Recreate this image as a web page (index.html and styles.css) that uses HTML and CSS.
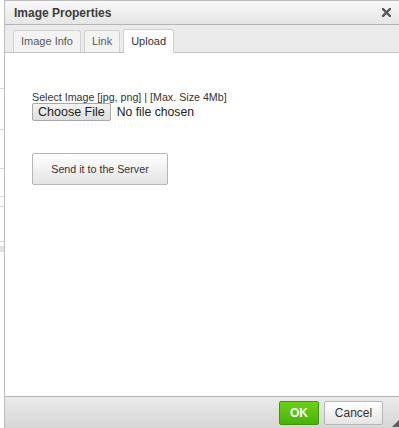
FILE: index.html
```html
<!DOCTYPE html>
<html lang="en">
<head>
  <meta charset="UTF-8" />
  <title>Image Properties</title>
  <link rel="stylesheet" href="styles.css">
</head>
<body>
  <div class="backdrop">
    <div class="line l1"></div>
    <div class="line l2"></div>
    <div class="line l3"></div>
    <div class="line l4"></div>
    <div class="line l5"></div>
    <div class="line l6"></div>
    <div class="line l7"></div>
  </div>
  <div class="dialog">
    <div class="titlebar">
      <span class="title">Image Properties</span>
      <svg class="close" width="9" height="9" viewBox="0 0 9 9">
        <path d="M1 1 L8 8 M8 1 L1 8" stroke="#565656" stroke-width="2.4" stroke-linecap="square"/>
      </svg>
    </div>
    <div class="tabs">
      <div class="tab">Image Info</div>
      <div class="tab">Link</div>
      <div class="tab active">Upload</div>
    </div>
    <div class="content">
      <form class="upload">
        <label class="hint">Select Image [jpg, png] | [Max. Size 4Mb]</label>
        <div class="file-row">
          <button type="button" class="choose">Choose File</button>
          <span class="file-name">No file chosen</span>
        </div>
        <button type="button" class="send">Send it to the Server</button>
      </form>
    </div>
    <div class="footer">
      <button type="button" class="btn ok">OK</button>
      <button type="button" class="btn cancel">Cancel</button>
      <span class="resize"></span>
    </div>
  </div>
</body>
</html>
```

FILE: styles.css
```css
body {
  margin: 0;
  width: 399px;
  height: 428px;
  overflow: hidden;
  font-family: 'Liberation Sans', Arial, sans-serif;
  background: #fff;
  position: relative;
}
.backdrop {
  position: absolute;
  left: 0;
  top: 0;
  width: 4px;
  height: 428px;
}
.line {
  position: absolute;
  left: 0;
  width: 4px;
  height: 1px;
  background: #d6d6d6;
}
.l1 { top: 88px; }
.l2 { top: 129px; }
.l3 { top: 168px; }
.l4 { top: 196px; }
.l5 { top: 206px; }
.l6 { top: 241px; }
.l7 { top: 246px; height: 6px; background: #e2e2e2; }

.dialog {
  position: absolute;
  left: 4px;
  top: 0;
  width: 400px;
  height: 428px;
  display: flex;
  flex-direction: column;
  border-left: 1px solid #bcbcbc;
  border-top: 1px solid #bcbcbc;
  box-sizing: border-box;
  background: #fff;
}
.titlebar {
  height: 23px;
  display: flex;
  align-items: center;
  justify-content: space-between;
  padding: 0 9px 0 9px;
  background: linear-gradient(#f8f8f8, #e6e6e6);
  border-bottom: 1px solid #b4b4b4;
}
.title {
  font-size: 12px;
  font-weight: bold;
  color: #3c3c3c;
}
.close {
  margin-right: 4px;
}
.tabs {
  height: 27px;
  display: flex;
  align-items: flex-end;
  gap: 3px;
  padding-left: 8px;
  background: #ebebeb;
  border-bottom: 1px solid #c4c4c4;
}
.tab {
  height: 21px;
  line-height: 21px;
  padding: 0 7px;
  font-size: 11px;
  color: #595959;
  background: #f3f3f3;
  border: 1px solid #d1d1d1;
  border-bottom: none;
  border-radius: 3px 3px 0 0;
}
.tab.active {
  background: #fff;
  color: #333;
  height: 23px;
  line-height: 23px;
  margin-bottom: -1px;
  border-color: #cfcfcf;
}
.content {
  flex: 1;
  padding: 38px 27px 0;
}
.upload {
  display: flex;
  flex-direction: column;
  align-items: flex-start;
}
.hint {
  font-size: 10.7px;
  color: #333;
  line-height: 12px;
}
.file-row {
  display: flex;
  align-items: center;
  gap: 6px;
}
.choose {
  font-family: 'Liberation Sans', Arial, sans-serif;
  font-size: 12.5px;
  height: 18px;
  padding: 0 5px;
  margin: 0;
  background: linear-gradient(#f4f4f4, #dedede);
  border: 1px solid #a9a9a9;
  border-radius: 2px;
  color: #222;
}
.file-name {
  font-size: 12.2px;
  color: #222;
}
.send {
  margin-top: 32px;
  width: 136px;
  height: 32px;
  font-family: 'Liberation Sans', Arial, sans-serif;
  font-size: 10.7px;
  color: #333;
  background: linear-gradient(#fff, #e4e4e4);
  border: 1px solid #b6b6b6;
  border-radius: 2px;
}
.footer {
  height: 31px;
  display: flex;
  align-items: center;
  gap: 5px;
  padding-left: 274px;
  position: relative;
  background: linear-gradient(#ebebeb, #d6d6d6);
  border-top: 1px solid #b2b2b2;
}
.btn {
  height: 24px;
  font-family: 'Liberation Sans', Arial, sans-serif;
  font-size: 12px;
  border-radius: 2px;
  padding: 0;
}
.ok {
  width: 40px;
  font-weight: bold;
  color: #fff;
  background: linear-gradient(#6cd015, #48b20a);
  border: 1px solid #3b9906;
}
.cancel {
  width: 59px;
  color: #333;
  background: linear-gradient(#fff, #e4e4e4);
  border: 1px solid #b6b6b6;
}
.resize {
  position: absolute;
  right: 2px;
  bottom: 1px;
  width: 0;
  height: 0;
  border-left: 10px solid transparent;
  border-bottom: 10px solid #5c5c5c;
}
```
